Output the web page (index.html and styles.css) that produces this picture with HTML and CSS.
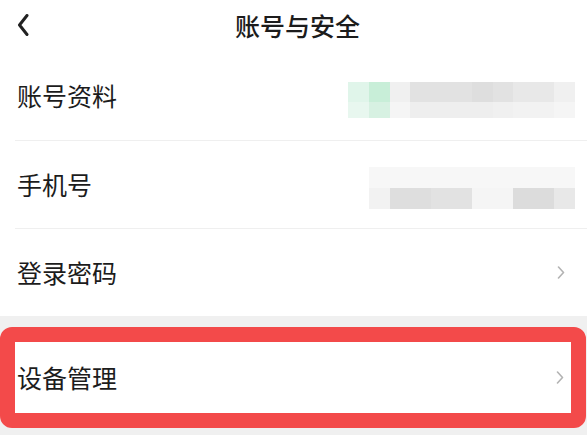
FILE: index.html
```html
<!DOCTYPE html>
<html lang="zh-CN">
<head>
<meta charset="utf-8">
<title>账号与安全</title>
<link rel="stylesheet" href="styles.css">
</head>
<body>
<div class="page">
  <header class="nav">
    <div class="back">
      <svg width="12" height="22" viewBox="0 0 12 22"><polyline points="10,1.5 2.5,11 10,20.5" fill="none" stroke="#222" stroke-width="3" stroke-linecap="round" stroke-linejoin="round"/></svg>
    </div>
    <h1 class="title">账号与安全</h1>
    <div class="spacer"></div>
  </header>

  <div class="group">
    <div class="row row-first">
      <span class="label">账号资料</span>
      <div class="mosaic mosaic-a">
        <i class="g1"></i><i class="g2"></i><i class="s0"></i><i class="s3"></i><i class="s3"></i><i class="s3"></i><i class="s4"></i><i class="s3"></i><i class="s2"></i><i class="s2"></i><i class="s0"></i>
        <i class="g3"></i><i class="g4"></i><i class="s5"></i><i class="s1"></i><i class="s1"></i><i class="s1"></i><i class="s1"></i><i class="s0"></i><i class="s6"></i><i class="s6"></i><i class="s5"></i>
      </div>
    </div>
    <div class="divider"></div>
    <div class="row">
      <span class="label">手机号</span>
      <div class="mosaic mosaic-b">
        <i class="s7"></i><i class="s7"></i><i class="s7"></i><i class="s7"></i><i class="s7"></i><i class="s7"></i><i class="s7"></i><i class="s7"></i><i class="s7"></i><i class="s7"></i>
        <i class="s6"></i><i class="s4"></i><i class="s4"></i><i class="s3"></i><i class="s3"></i><i class="s5"></i><i class="s5"></i><i class="s8"></i><i class="s8"></i><i class="s2"></i>
      </div>
    </div>
    <div class="divider"></div>
    <div class="row">
      <span class="label">登录密码</span>
      <svg class="arrow" width="8" height="13" viewBox="0 0 8 13"><polyline points="1.5,1 6.5,6.5 1.5,12" fill="none" stroke="#b3b3b3" stroke-width="1.6" stroke-linecap="round" stroke-linejoin="round"/></svg>
    </div>
  </div>

  <div class="gap">
    <div class="row row-marked">
      <span class="label">设备管理</span>
      <svg class="arrow" width="8" height="13" viewBox="0 0 8 13"><polyline points="1.5,1 6.5,6.5 1.5,12" fill="none" stroke="#b3b3b3" stroke-width="1.6" stroke-linecap="round" stroke-linejoin="round"/></svg>
    </div>
  </div>
</div>
</body>
</html>
```

FILE: styles.css
```css
* { box-sizing: border-box; }
html, body { margin: 0; padding: 0; background: #f0f0f0; }
body {
  font-family: "Noto Sans CJK SC", "Noto Sans", sans-serif;
  color: #1c1c1c;
}
.page { width: 587px; height: 435px; overflow: hidden; background: #f0f0f0; }

.nav {
  height: 50px;
  background: #fff;
  display: grid;
  grid-template-columns: 1fr auto 1fr;
  align-items: center;
}
.back { padding-left: 17px; display: flex; align-items: center; }
.title {
  margin: 0;
  padding-left: 8px;
  font-size: 25px;
  font-weight: 500;
  line-height: 50px;
  color: #1c1c1c;
}

.group { background: #fff; }
.row {
  height: 87px;
  display: flex;
  align-items: center;
  justify-content: space-between;
  padding: 0 22px 0 17px;
  background: #fff;
}
.row-first { height: 90px; }
.label { font-size: 25px; line-height: 1; }
.divider { height: 1px; margin-left: 15px; background: #efefef; }

.mosaic { display: grid; grid-template-columns: repeat(11, 20.6px); margin-right: -10px; }
.mosaic i { display: block; }
.mosaic-a { grid-template-rows: 20px 16px; margin-top: 10px; }
.mosaic-b { grid-template-columns: repeat(10, 20.6px); grid-template-rows: 21px 21px; margin-top: 6px; }

.g1 { background: #e0f5ea; }
.g2 { background: #c8eed8; }
.g3 { background: #e8f7ef; }
.g4 { background: #d7f1e2; }
.s0 { background: #f0f0f0; }
.s1 { background: #eeeeee; }
.s2 { background: #e8e8e8; }
.s3 { background: #e2e2e2; }
.s4 { background: #dedede; }
.s5 { background: #f5f5f5; }
.s6 { background: #f2f2f2; }
.s7 { background: #f7f7f7; }
.s8 { background: #dcdcdc; }

.arrow { display: block; }

.gap { padding: 11px 1px 7px 0; background: #f0f0f0; }
.row-marked {
  height: 101px;
  border: 15px solid #f34a4a;
  border-radius: 12px;
  padding: 0 7px 0 2px;
}
```
